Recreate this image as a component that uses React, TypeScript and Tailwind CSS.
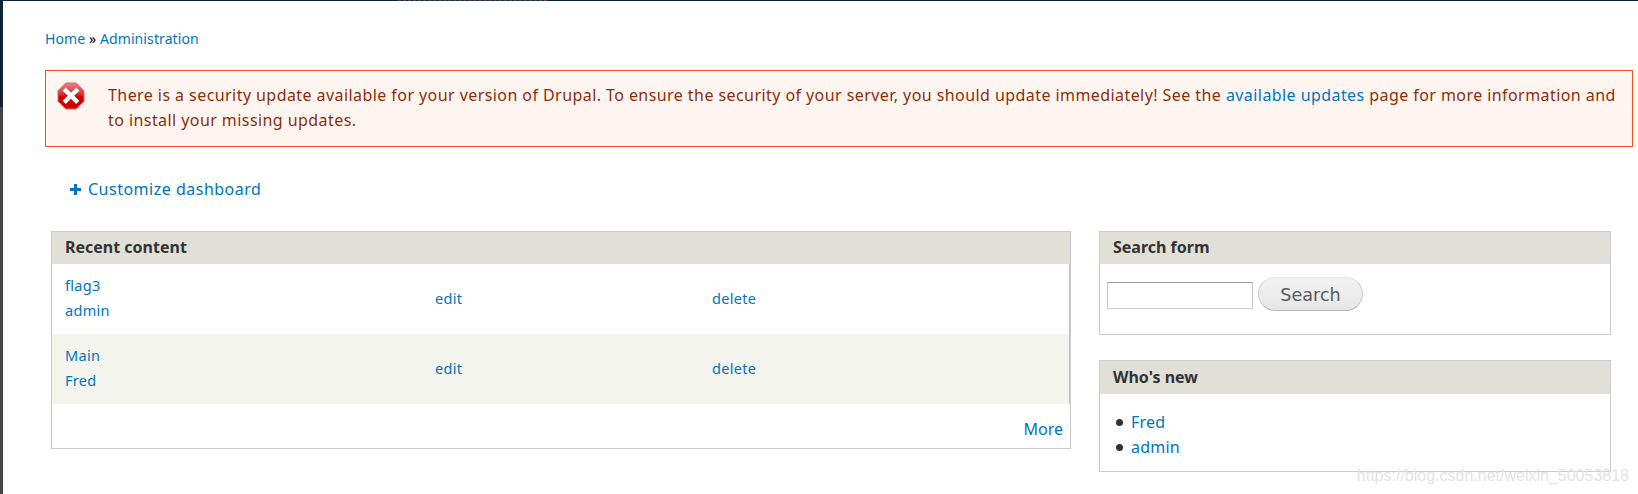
import type { ReactNode } from "react";

const recentContent = [
  { title: "flag3", author: "admin" },
  { title: "Main", author: "Fred" },
];

const newUsers = ["Fred", "admin"];

function Link({ children }: { children: ReactNode }) {
  return (
    <a href="#" className="text-[#0074bd]">
      {children}
    </a>
  );
}

function ErrorIcon() {
  return (
    <svg width="28" height="28" viewBox="0 0 28 28" className="shrink-0">
      <defs>
        <linearGradient id="stop" x1="0" y1="0" x2="0" y2="1">
          <stop offset="0" stopColor="#e88080" />
          <stop offset="0.4" stopColor="#d93a3a" />
          <stop offset="0.55" stopColor="#cc0000" />
          <stop offset="1" stopColor="#d40000" />
        </linearGradient>
      </defs>
      <path d="M8.7 1h10.6L27 8.7v10.6L19.3 27H8.7L1 19.3V8.7z" fill="url(#stop)" stroke="#dc6a68" strokeWidth="1" />
      <path d="M8.5 9l11 11M19.5 9l-11 11" stroke="#8a1a1a" strokeOpacity="0.4" strokeWidth="6" />
      <path d="M7.2 7.2l13.6 13.2M20.8 7.2L7.2 20.4" stroke="#fff" strokeWidth="4.4" />
    </svg>
  );
}

function Panel({ title, headClass, className, children }: { title: string; headClass: string; className: string; children: ReactNode }) {
  return (
    <section className={`flex flex-col border border-[#cccccc] ${className}`}>
      <h2 className={`shrink-0 bg-[#e0e0d8] pl-[13px] text-[16px] font-bold text-[#333333] ${headClass}`}>{title}</h2>
      {children}
    </section>
  );
}

export default function App() {
  return (
    <div className="relative flex h-[494px] w-[1638px] overflow-hidden bg-white font-['Noto_Sans','Open_Sans',sans-serif] text-[16px]">
      <div className="flex w-[3px] shrink-0 flex-col">
        <div className="h-[107px] bg-[#0c2436]" />
        <div className="flex-1 bg-[#444444]" />
      </div>
      <main className="flex flex-1 flex-col">
        <div className="flex h-px shrink-0 bg-[#0c2436] pl-[395px]">
          <div className="w-[149px] border-t border-dashed border-[#4a4548]" />
        </div>
        <nav className="ml-[42px] mt-[26px] h-6 whitespace-nowrap text-[14px] leading-6 tracking-[0.1px] text-black">
          <Link>Home</Link> » <Link>Administration</Link>
        </nav>

        <div className="ml-[42px] mt-[19px] flex h-[77px] w-[1588px] border border-[#ed541d] bg-[#fef5f1] pl-[11px] pt-[11px]">
          <ErrorIcon />
          <p className="ml-[23px] mt-[1px] whitespace-nowrap leading-[25px] tracking-[0.43px] text-[#8c2e0b]">
            There is a security update available for your version of Drupal. To ensure the security of your server, you should update immediately! See the{" "}
            <Link>available updates</Link> page for more information and
            <br />
            to install your missing updates.
          </p>
        </div>

        <div className="ml-[67px] mt-[30px] flex h-6 items-center gap-[7px] leading-6 tracking-[0.5px]">
          <svg width="11" height="11" viewBox="0 0 11 11">
            <path d="M4 0h3v4h4v3H7v4H4V7H0V4h4z" fill="#0074bd" />
          </svg>
          <Link>Customize dashboard</Link>
        </div>

        <div className="ml-12 mt-[30px] flex items-start gap-7">
          <Panel title="Recent content" className="h-[218px] w-[1020px]" headClass="h-8 leading-[31px]">
            <table className="block border-r border-[#bebfb9] text-[14.5px] leading-[25px] tracking-[0.3px]">
              <tbody className="block">
                {recentContent.map((row) => (
                  <tr key={row.title} className="flex h-[70px] items-center pb-[2px] even:bg-[#f3f4ee]">
                    <td className="w-[370px] pl-[13px]">
                      <Link>{row.title}</Link>
                      <br />
                      <Link>{row.author}</Link>
                    </td>
                    <td className="w-[277px] pl-[13px]">
                      <Link>edit</Link>
                    </td>
                    <td className="flex-1 pl-[13px]">
                      <Link>delete</Link>
                    </td>
                  </tr>
                ))}
              </tbody>
            </table>
            <div className="pr-[7px] pt-[13px] text-right leading-6">
              <Link>More</Link>
            </div>
          </Panel>

          <div className="flex w-[512px] flex-col gap-[25px]">
            <Panel title="Search form" className="h-[104px]" headClass="h-8 leading-[31px]">
              <form className="flex items-start gap-[5px] pl-[7px] pt-[13px]">
                <input className="mt-[5px] h-[27px] w-[146px] border border-[#cccccc] border-t-[#999999] bg-white" />
                <button
                  type="button"
                  className="h-[34px] w-[105px] rounded-full border border-[#cccccc] border-b-[#b4b4b4] border-t-[#e4e4e4] bg-linear-to-b from-[#f3f3f3] to-[#e6e6e6] pt-px font-['DejaVu_Sans',sans-serif] text-[17.6px] leading-8 text-[#5a5a5a]"
                >
                  Search
                </button>
              </form>
            </Panel>
            <Panel title="Who's new" className="h-[112px]" headClass="h-[33px] leading-[33px]">
              <ul className="pl-4 pt-4 leading-[25px] tracking-[0.2px]">
                {newUsers.map((name) => (
                  <li key={name} className="flex items-center gap-2">
                    <span className="size-[7px] rounded-full bg-[#333333]" />
                    <Link>{name}</Link>
                  </li>
                ))}
              </ul>
            </Panel>
          </div>
        </div>
      </main>
      <div className="absolute bottom-[8px] right-[9px] whitespace-nowrap font-['Liberation_Sans',sans-serif] text-[16px] leading-5 text-[#e4e4e4]">
        https://blog.csdn.net/weixin_50053818
      </div>
    </div>
  );
}
